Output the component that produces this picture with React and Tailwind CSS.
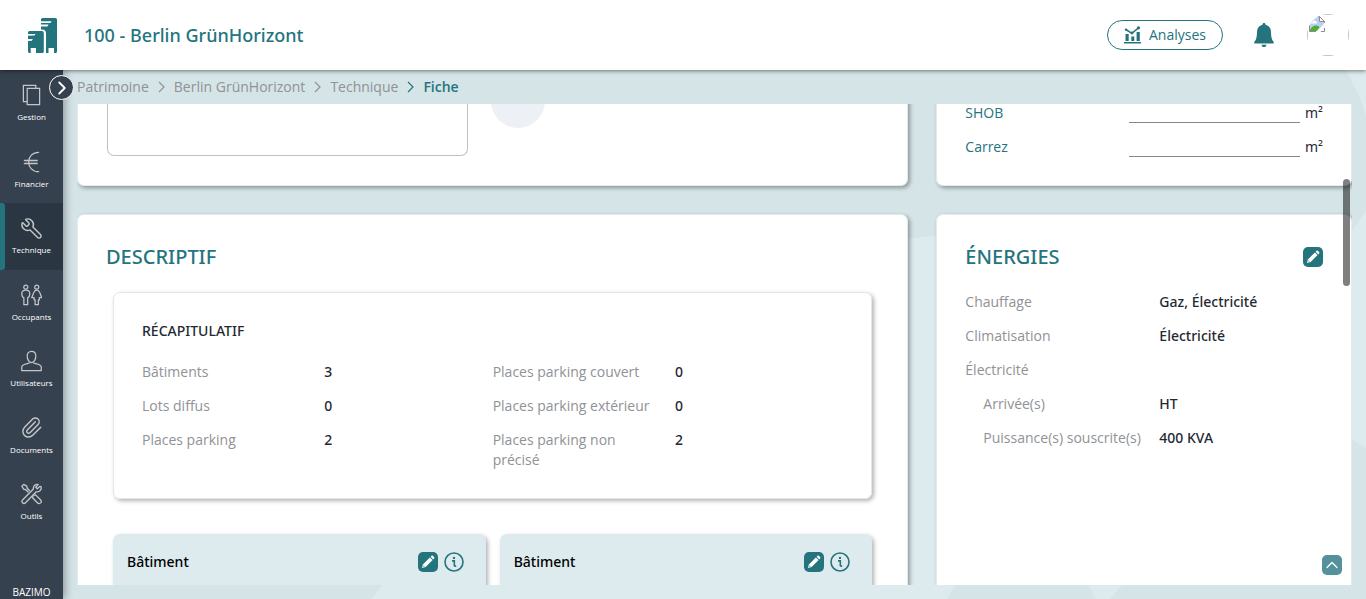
import React from "react";
import { Wrench, Paperclip, ChevronRight, ChevronUp } from "lucide-react";

const strokeProps = {
  width: 21,
  height: 22,
  viewBox: "0 0 22 22",
  fill: "none",
  stroke: "currentColor",
  strokeWidth: 1.3,
  strokeLinejoin: "round",
  strokeLinecap: "round",
  "aria-hidden": true,
};

function PagesIcon() {
  return (
    <svg {...strokeProps} strokeLinejoin="miter">
      <path d="M6 18H2.500V1h13v3" />
      <path d="M6.500 4h13v17h-13z" />
    </svg>
  );
}

function EuroIcon() {
  return (
    <svg {...strokeProps}>
      <path d="M18.500 .8C12 .8 8 5.500 8 11s4 10.200 10.500 10.200M3.500 9.300H17M3.500 12.700H17" />
      <path d="M4 11h13" strokeWidth=".6" />
    </svg>
  );
}

function WrenchIcon() {
  return <Wrench size={23} strokeWidth={1.5} className="-scale-x-100" aria-hidden />;
}

function PeopleIcon() {
  return (
    <svg {...strokeProps}>
      <circle cx="5" cy="2.800" r="2.100" />
      <circle cx="16.500" cy="2.800" r="2.100" />
      <path d="M5 6C2 6 .8 7.500 .8 9.500c0 2.500.7 4 2.200 4.500v7.200h4V14c1.500-.5 2.200-2 2.200-4.500C9.200 7.500 8 6 5 6z" />
      <path d="M16.500 6c-1.700 0-2.500.8-3 2.200l-2.300 5.600h2.600v2.400h1v5h3.400v-5h1v-2.400h2.600l-2.300-5.600c-.5-1.400-1.300-2.200-3-2.200z" />
    </svg>
  );
}

function UserIcon() {
  return (
    <svg {...strokeProps}>
      <path d="M11 .8c3 0 4.500 2 4.500 5 0 3.700-2 7-4.500 7s-4.500-3.300-4.500-7c0-3 1.500-5 4.500-5z" />
      <path d="M8.500 13.200c-4 1-7.700 1.300-7.700 4v4h20.400v-4c0-2.700-3.700-3-7.700-4" />
    </svg>
  );
}

function ClipIcon() {
  return <Paperclip size={23} strokeWidth={1.5} aria-hidden />;
}

function ToolsIcon() {
  return (
    <svg {...strokeProps} strokeWidth={1.4}>
      <path d="M19.800 3l-2.700 2.600-1.700-1.700L18 1.200c-2.500-.9-5.500.8-5 4.600L1.600 17.200c-.9.9-.9 2 0 2.900s2.200.9 3.100 0L16 8.700c3.800.6 5.900-2.700 4.900-5.500z" />
      <path d="M8.800 7.400L6.500 5 6 2.800 2.800.9.900 2.800l1.900 3.200 2.200.5 2.400 2.400" />
      <path d="M13.600 12.200l1.700-.3 5.100 5.100c1.100 1.100 1 2.400.2 3.300-.9.900-2.300.9-3.400-.2l-4.900-5 .2-1.600" />
    </svg>
  );
}

function Logo() {
  return (
    <svg width="29" height="35" viewBox="0 0 29 35" fill="#24747e" aria-hidden>
      <path d="M14.500 0H27.500A1.500 1.500 0 0 1 29 1.500V33.500a1.500 1.500 0 0 1-1.500 1.500H26v-5h-5.500v5H18V15.500a4 4 0 0 0-4-4h-1V8.400h6.500l1-1.800H13V5h9.500l1-1.800H13V1.500A1.500 1.500 0 0 1 14.500 0z" />
      <path d="M1.500 13h12.300a2 2 0 0 1 2 2v18.500a1.500 1.500 0 0 1-1.500 1.500H8v-5H2.700v5H1.500A1.500 1.500 0 0 1 0 33.500V23l3.800-.2 1-1.700H0V17.800l6.500-.2 1-1.700H0V14.500A1.500 1.500 0 0 1 1.500 13z" />
    </svg>
  );
}

function AnalysesIcon() {
  return (
    <svg width="17" height="18" viewBox="0 0 17 18" fill="#24747e" aria-hidden>
      <path d="M0 16h17v1.500H0zM1.500 8h3.200v7H1.500zM7.300 10.500h3V15h-3zM12.600 6h3.200v9h-3.200z" />
      <path d="M1.800 3.500L7.800 7.300 14.500 1.800" fill="none" stroke="#24747e" strokeWidth="1.500" />
      <circle cx="2" cy="3.600" r="1.200" />
      <circle cx="7.900" cy="7" r="1.400" />
      <circle cx="14.500" cy="1.800" r="1.600" />
    </svg>
  );
}

function BellIcon() {
  return (
    <svg width="20" height="24" viewBox="0 0 20 24" fill="#24747e" aria-hidden>
      <path d="M10 0c1 0 1.500.7 1.500 1.700C15 2.500 17 5 17 9c0 5 .8 7.800 2.600 9.800.4.600.2 1.700-.8 1.700H1.200c-1 0-1.200-1.100-.8-1.700C2.200 16.800 3 14 3 9c0-4 2-6.500 5.500-7.300C8.500.7 9 0 10 0zM7.500 21.700h5c-.2 1.400-1.200 2.300-2.500 2.300s-2.300-.9-2.500-2.300z" />
    </svg>
  );
}

function MissingAvatar() {
  return (
    <span className="block size-[42px] overflow-hidden rounded-full">
      <span className="block size-full border border-[#c0c0c0] p-px">
        <svg width="16" height="16" viewBox="0 0 16 16" aria-hidden>
          <path d="M.5.500h10l5 5v10H.5z" fill="#fff" />
          <path d="M1 1h9v5h5v2L8 15H1z" fill="#b9cff6" />
          <path d="M2 7.500C2 6 3 5.500 4 5.700 4.300 4 6.500 4 7 5.500c1.500 0 1.500 2 .3 2H2z" fill="#fff" />
          <path d="M1 15c0-3 3-5.500 6-5.500 2 0 3 .8 3.500 2L7.500 15z" fill="#4fae33" />
          <path d="M.5 15.500V.5h10l5 5V7M10.500.5v5h5M.5 15.500H7M11 15.500h4.500V12" fill="none" stroke="#8c8c8c" />
          <path d="M16 7.500L8 16h3.500L16 11z" fill="#fff" />
        </svg>
      </span>
    </span>
  );
}

function EditButton({ label }) {
  return (
    <button type="button" aria-label={label} className="flex size-5 items-center justify-center rounded-[5px] bg-[#24747e]">
      <svg width="14" height="14" viewBox="0 0 14 14" fill="#fff" aria-hidden>
        <path d="M1 13l.9-3.600 7-7 2.700 2.700-7 7z" />
        <path d="M9.600 1.700l.8-.8c.5-.5 1.100-.5 1.600 0l1.100 1.100c.5.500.5 1.100 0 1.600l-.8.8z" />
        <path d="M2.600 10.100l1.300 1.300-1.900.6z" fill="#24747e" opacity=".5" />
      </svg>
    </button>
  );
}

function InfoButton() {
  return (
    <button type="button" aria-label="Informations" className="size-5">
      <svg width="20" height="20" viewBox="0 0 20 20" aria-hidden>
        <circle cx="10" cy="10" r="9" fill="none" stroke="#24747e" strokeWidth="1.600" />
        <circle cx="10" cy="5.900" r="1.200" fill="#24747e" />
        <path d="M8 8.900h2.300v4.300c0 .9.600 1.100 1.900.8" fill="none" stroke="#24747e" strokeWidth="1.600" />
      </svg>
    </button>
  );
}

const navItems = [
  { label: "Gestion", Icon: PagesIcon },
  { label: "Financier", Icon: EuroIcon },
  { label: "Technique", Icon: WrenchIcon, active: true },
  { label: "Occupants", Icon: PeopleIcon },
  { label: "Utilisateurs", Icon: UserIcon },
  { label: "Documents", Icon: ClipIcon },
  { label: "Outils", Icon: ToolsIcon },
];

function Sidebar() {
  return (
    <aside className="relative z-10 flex w-[63px] shrink-0 flex-col justify-between bg-[#36414f] text-white shadow-[2px_0_8px_rgba(0,0,0,0.35)]">
      <nav className="flex h-[466px] flex-col">
        {navItems.map(({ label, Icon, active }) => (
          <a
            key={label}
            href="#"
            className={
              active
                ? "relative flex flex-1 flex-col items-center bg-[#2b3643] pt-[13px]"
                : "relative flex flex-1 flex-col items-center pt-[13px]"
            }
          >
            {active && <span className="absolute inset-y-0 left-0 w-[5px] rounded-r-[3px] bg-[#24747e]" />}
            <span className="flex h-6 items-center text-[#c2c6ca]">
              <Icon />
            </span>
            <span className="mt-[3px] text-[8px] leading-[14px]">{label}</span>
          </a>
        ))}
      </nav>
      <div className="text-center text-[10px] leading-[14px]">BAZIMO</div>
      <button
        type="button"
        aria-label="Ouvrir le menu"
        className="absolute top-[5px] -right-[11px] flex size-[25px] items-center justify-center rounded-full border-[1.500px] border-white bg-[#36414f]"
      >
        <ChevronRight size={22} strokeWidth={2} className="shrink-0" />
      </button>
    </aside>
  );
}

function Card({ className = "", children }) {
  return (
    <section className={"rounded-[7px] border border-[#e3ebed] bg-white shadow-[2px_2px_4px_rgba(0,0,0,0.35)] " + className}>
      {children}
    </section>
  );
}

function Field({ label, value }) {
  return (
    <div className="flex py-[7px]">
      <dt className="w-[52%] shrink-0 pr-4 text-[#8f9296]">{label}</dt>
      <dd className="font-['Noto_Sans','Open_Sans',sans-serif] font-medium text-[#1f2a33]">{value}</dd>
    </div>
  );
}

function EnergyField({ label, value, indent }) {
  return (
    <div className="flex py-[7px]">
      <dt className={indent ? "w-[194px] shrink-0 pl-[18px] text-[#8f9296]" : "w-[194px] shrink-0 text-[#8f9296]"}>{label}</dt>
      <dd className="font-['Noto_Sans','Open_Sans',sans-serif] font-medium text-[#1f2a33]">{value}</dd>
    </div>
  );
}

function AreaField({ id, label }) {
  return (
    <div className="flex h-[34px] items-center">
      <label htmlFor={id} className="flex-1 text-[#24747e]">{label}</label>
      <input id={id} type="text" className="h-5 w-[171px] border-b border-[#85898d] bg-transparent outline-none" />
      <span className="ml-[5px] font-['Noto_Sans','Open_Sans',sans-serif] text-[#1f2a33]">m²</span>
    </div>
  );
}

function BuildingCard() {
  return (
    <article className="flex-1 rounded-[7px] bg-[#deebee] shadow-[2px_2px_4px_rgba(0,0,0,0.3)]">
      <header className="flex h-14 items-center gap-[6px] pr-[22px] pl-[14px]">
        <h4 className="flex-1 font-['Noto_Sans','Open_Sans',sans-serif] font-medium text-black">Bâtiment</h4>
        <EditButton label="Modifier le bâtiment" />
        <InfoButton />
      </header>
    </article>
  );
}

function Separator({ current }) {
  return (
    <svg width="9" height="12" viewBox="0 0 9 12" fill="none" stroke={current ? "#24747e" : "#8f9296"} strokeWidth="1.200" aria-hidden>
      <path d="M2 1l5 5-5 5" />
    </svg>
  );
}

export default function App() {
  return (
    <div className="flex h-screen flex-col overflow-hidden font-['Open_Sans','Noto_Sans',sans-serif] text-[14px] leading-5">
      <header className="relative z-20 flex h-[70px] shrink-0 items-center bg-white pr-[17px] pl-7 shadow-[0_1px_4px_rgba(0,0,0,0.5)]">
        <Logo />
        <h1 className="ml-[27px] flex-1 font-['Noto_Sans','Open_Sans',sans-serif] text-[18px] leading-6 font-medium text-[#24747e]">100 - Berlin GrünHorizont</h1>
        <button type="button" className="flex h-[30px] items-center gap-2 rounded-full border border-[#24747e] px-4 text-[#24747e]">
          <AnalysesIcon />
          Analyses
        </button>
        <button type="button" aria-label="Notifications" className="ml-[31px]">
          <BellIcon />
        </button>
        <button type="button" aria-label="Profil" className="ml-[33px]">
          <MissingAvatar />
        </button>
      </header>

      <div className="flex min-h-0 flex-1">
        <Sidebar />
        <main className="relative flex min-w-0 flex-1 flex-col bg-[#d5e4e7] px-[14px] pb-[14px]">
          {/* Decorative background, drawn in main-area coordinates */}
          <svg className="absolute inset-0 size-full" viewBox="0 0 1303 529" preserveAspectRatio="xMaxYMax slice" aria-hidden>
            <path d="M1282 0Q1297 22 1303 47V0z" fill="#deebee" />
            <path d="M309 529Q430 350 700 210Q800 170 873 166L1200 240Q1275 190 1303 140V378Q1200 310 1100 420Q1075 460 1059 515L1047 529H1033L1025 515Q958 400 892 515L884 529z" fill="#deebee" />
          </svg>

          <nav aria-label="Fil d'Ariane" className="relative flex h-[34px] shrink-0 items-center gap-2 text-[#8f9296]">
            <a href="#">Patrimoine</a>
            <Separator />
            <a href="#">Berlin GrünHorizont</a>
            <Separator />
            <a href="#">Technique</a>
            <Separator current />
            <a href="#" aria-current="page" className="font-semibold text-[#24747e]">Fiche</a>
          </nav>

          <div className="relative min-h-0 flex-1 overflow-hidden">
            <div className="-mt-2 grid grid-cols-[2fr_1fr] gap-7">
              <Card className="rounded-t-none border-t-0">
                <div className="flex items-start gap-[23px] px-[29px] pb-[29px]">
                  <textarea aria-label="Commentaire" className="h-[60px] w-[361px] resize-none rounded-b-[7px] border border-t-0 border-[#bfc1c6] outline-none" />
                  <span className="h-8 w-[54px] overflow-hidden">
                    <span className="-mt-[22px] block size-[54px] rounded-full bg-[#edf1f6]" />
                  </span>
                </div>
              </Card>
              <Card className="rounded-t-none border-t-0">
                <div className="px-7 pb-[21px]">
                  <AreaField id="shob" label="SHOB" />
                  <AreaField id="carrez" label="Carrez" />
                </div>
              </Card>

              <Card>
                <div className="px-7 pt-7 pb-8">
                  <h2 className="font-['Noto_Sans','Open_Sans',sans-serif] text-[20px] leading-7 font-medium text-[#24747e]">DESCRIPTIF</h2>
                  <div className="mx-[7px] mt-[21px] rounded-[7px] border border-[#e4e6e8] px-7 pt-7 pb-[21px] shadow-[2px_2px_4px_rgba(0,0,0,0.3)]">
                    <h3 className="mb-[14px] font-['Noto_Sans','Open_Sans',sans-serif] font-medium text-[#1f2a33]">RÉCAPITULATIF</h3>
                    <div className="grid grid-cols-2">
                      <dl>
                        <Field label="Bâtiments" value="3" />
                        <Field label="Lots diffus" value="0" />
                        <Field label="Places parking" value="2" />
                      </dl>
                      <dl>
                        <Field label="Places parking couvert" value="0" />
                        <Field label="Places parking extérieur" value="0" />
                        <Field label="Places parking non précisé" value="2" />
                      </dl>
                    </div>
                  </div>
                  <div className="mx-[7px] mt-[35px] flex gap-[14px]">
                    <BuildingCard />
                    <BuildingCard />
                  </div>
                </div>
              </Card>
              <Card>
                <div className="px-7 pt-7">
                  <div className="flex items-center justify-between">
                    <h2 className="font-['Noto_Sans','Open_Sans',sans-serif] text-[20px] leading-7 font-medium text-[#24747e]">ÉNERGIES</h2>
                    <EditButton label="Modifier les énergies" />
                  </div>
                  <dl className="mt-[14px]">
                    <EnergyField label="Chauffage" value="Gaz, Électricité" />
                    <EnergyField label="Climatisation" value="Électricité" />
                    <EnergyField label="Électricité" value="" />
                    <EnergyField label="Arrivée(s)" value="HT" indent />
                    <EnergyField label="Puissance(s) souscrite(s)" value="400 KVA" indent />
                  </dl>
                </div>
              </Card>
            </div>

            <span className="absolute top-[75px] right-[2px] h-[107px] w-[7px] rounded-full bg-black/50" />
            <button
              type="button"
              aria-label="Haut de page"
              className="absolute right-[10px] bottom-[10px] flex size-5 items-center justify-center rounded-[5px] bg-[#54919a] text-white"
            >
              <ChevronUp size={20} strokeWidth={1.5} />
            </button>
          </div>
        </main>
      </div>
    </div>
  );
}
